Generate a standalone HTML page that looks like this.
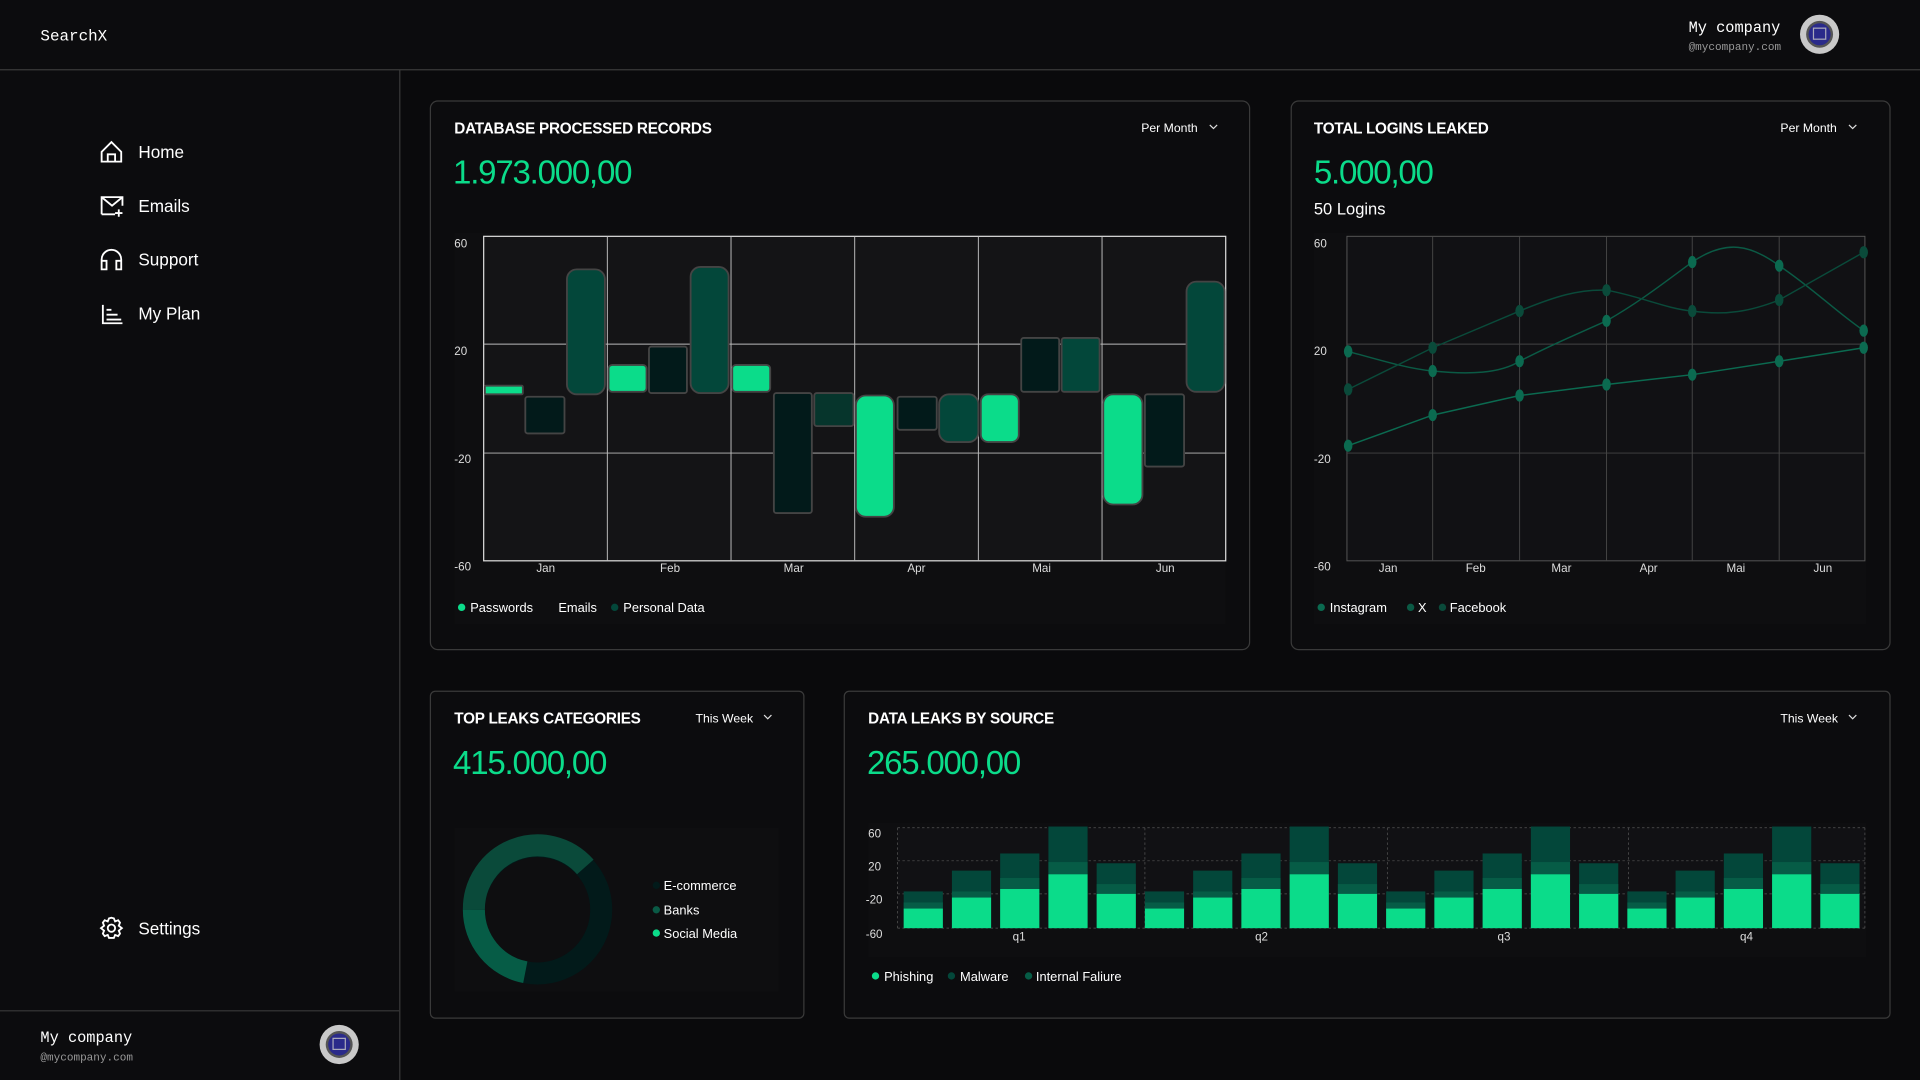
<!DOCTYPE html>
<html><head><meta charset="utf-8"><style>
html,body{margin:0;padding:0;background:#0a0a0c;overflow:hidden}
svg{display:block}
text{font-family:"Liberation Sans",sans-serif;fill:#fff}
.m{font-family:"Liberation Mono",monospace}
.t{font-size:12.5px;font-weight:bold;letter-spacing:-0.2px}
.v{font-size:27px;fill:#0bdc8a;letter-spacing:-1px}
.ax{font-size:9.5px;fill:#ddd}
.lg{font-size:10.5px}
.nav{font-size:14px}
</style></head><body>
<svg width="1920" height="1080" viewBox="0 0 1568 882" xmlns="http://www.w3.org/2000/svg">
<rect width="1568" height="882" fill="#0a0a0c"/>
<rect width="1568" height="57" fill="#0c0c0e"/>
<rect x="0" y="57" width="326" height="825" fill="#0c0c0e"/>
<line x1="0" y1="57" x2="1568" y2="57" stroke="#3a3a3a"/>
<line x1="326.5" y1="57" x2="326.5" y2="882" stroke="#3a3a3a"/>
<line x1="0" y1="825.5" x2="326" y2="825.5" stroke="#3a3a3a"/>
<text x="33" y="33" class="m" font-size="13">SearchX</text>
<text x="1379" y="26" class="m" font-size="12.5">My company</text>
<text x="1379" y="41" class="m" font-size="9" fill="#aaa" style="fill:#999">@mycompany.com</text>
<g transform="translate(1486,28)"><circle r="16" fill="#c9c9c9"/><circle r="11" fill="#555"/><circle r="9" fill="#2a2a8a"/><rect x="-5" y="-5" width="10" height="9" fill="none" stroke="#aab" stroke-width="1"/></g>
<!-- nav -->
<g fill="none" stroke="#fff" stroke-width="1.5">
<path d="M83 132V124L91 116L99 124V132H83ZM88 132V126H94V132"/>
<path d="M83 175V161H100V168M83 161L91.5 168L100 161M83 175H94M97 171V177M94 174H100"/>
<path d="M83 216V212A8 8 0 0 1 99 212V216M83 213H87V220H83ZM95 213H99V220H95Z"/>
<path d="M84 249V264H100M87 253H91M87 257H96M87 261H99"/>
<circle cx="91" cy="758" r="3"/>
<path d="M91 749.5L93 750L94 752.5L96.5 751.5L98 753.5L97 756L99.5 758L97 760L98 762.5L96.5 764.5L94 763.5L93 766H89L88 763.5L85.5 764.5L84 762.5L85 760L82.5 758L85 756L84 753.5L85.5 751.5L88 752.5L89 750Z"/>
</g>
<text x="113" y="129" class="nav">Home</text>
<text x="113" y="173" class="nav">Emails</text>
<text x="113" y="217" class="nav">Support</text>
<text x="113" y="261" class="nav">My Plan</text>
<text x="113" y="763" class="nav">Settings</text>
<text x="33" y="851" class="m" font-size="12.5">My company</text>
<text x="33" y="866" class="m" font-size="9" style="fill:#999">@mycompany.com</text>
<g transform="translate(277,853)"><circle r="16" fill="#c9c9c9"/><circle r="11" fill="#555"/><circle r="9" fill="#2a2a8a"/><rect x="-5" y="-5" width="10" height="9" fill="none" stroke="#aab" stroke-width="1"/></g>

<!-- cards -->
<g fill="#0c0c0e" stroke="#3a3a3a">
<rect x="351.5" y="82.5" width="669" height="448" rx="6"/>
<rect x="1054.5" y="82.5" width="489" height="448" rx="6"/>
<rect x="351.5" y="564.5" width="305" height="267" rx="4"/>
<rect x="689.5" y="564.5" width="854" height="267" rx="4"/>
</g>
<text x="371" y="109" class="t">DATABASE PROCESSED RECORDS</text>
<text x="1073" y="109" class="t">TOTAL LOGINS LEAKED</text>
<text x="371" y="591" class="t">TOP LEAKS CATEGORIES</text>
<text x="709" y="591" class="t">DATA LEAKS BY SOURCE</text>
<g font-size="10"><text x="932" y="108">Per Month</text><text x="1454" y="108">Per Month</text><text x="568" y="590">This Week</text><text x="1454" y="590">This Week</text></g>
<g fill="none" stroke="#ddd" stroke-width="1"><path d="M988 102L991 105L994 102M1510 102L1513 105L1516 102M624 584L627 587L630 584M1510 584L1513 587L1516 584"/></g>
<text x="370" y="150" class="v">1.973.000,00</text>
<text x="1073" y="150" class="v">5.000,00</text>
<text x="1073" y="175" font-size="13.5">50 Logins</text>
<text x="370" y="632" class="v">415.000,00</text>
<text x="708" y="632" class="v">265.000,00</text>

<!-- chart1 -->
<rect x="371" y="190" width="630" height="320" fill="#0e0e10"/>
<rect x="395" y="193" width="606" height="265" fill="#141416" stroke="#ddd" stroke-width="1"/>
<g stroke="#bbb" stroke-width="0.8"><path d="M395 281H1001M395 370H1001M496 193V458M597 193V458M698 193V458M799 193V458M900 193V458"/></g>
<g class="ax"><text x="371" y="202" class="ax">60</text><text x="371" y="290" class="ax">20</text><text x="371" y="378" class="ax">-20</text><text x="371" y="466" class="ax">-60</text>
<text x="438" y="467" class="ax" font-size="8">Jan</text><text x="539" y="467" class="ax" font-size="8">Feb</text><text x="640" y="467" class="ax" font-size="8">Mar</text><text x="741" y="467" class="ax" font-size="8">Apr</text><text x="843" y="467" class="ax" font-size="8">Mai</text><text x="944" y="467" class="ax" font-size="8">Jun</text></g>
<g stroke="#444" stroke-width="1.5">
<rect x="396" y="315" width="31" height="7" rx="1" fill="#0bdc8a"/>
<rect x="429" y="324" width="32" height="30" rx="2" fill="#021a1a"/>
<rect x="463" y="220" width="31" height="102" rx="8" fill="#03473a"/>
<rect x="497" y="298" width="31" height="22" rx="3" fill="#0bdc8a"/>
<rect x="530" y="283" width="31" height="38" rx="2" fill="#021a1a"/>
<rect x="564" y="218" width="31" height="103" rx="8" fill="#03473a"/>
<rect x="598" y="298" width="31" height="22" rx="3" fill="#0bdc8a"/>
<rect x="632" y="321" width="31" height="98" rx="2" fill="#021a1a"/>
<rect x="665" y="321" width="32" height="27" rx="2" fill="#06352c"/>
<rect x="699" y="323" width="31" height="99" rx="8" fill="#0bdc8a"/>
<rect x="733" y="324" width="32" height="27" rx="2" fill="#021a1a"/>
<rect x="767" y="322" width="32" height="39" rx="8" fill="#03473a"/>
<rect x="801" y="322" width="31" height="39" rx="6" fill="#0bdc8a"/>
<rect x="834" y="276" width="31" height="44" rx="2" fill="#021a1a"/>
<rect x="867" y="276" width="31" height="44" rx="2" fill="#03473a"/>
<rect x="901" y="322" width="32" height="90" rx="8" fill="#0bdc8a"/>
<rect x="935" y="322" width="32" height="59" rx="2" fill="#021a1a"/>
<rect x="969" y="230" width="31" height="90" rx="8" fill="#03473a"/>
</g>
<circle cx="377" cy="496" r="3" fill="#0bdc8a"/><text x="384" y="500" class="lg">Passwords</text>
<text x="456" y="500" class="lg">Emails</text>
<circle cx="502" cy="496" r="3" fill="#03473a"/><text x="509" y="500" class="lg">Personal Data</text>

<!-- chart2 -->
<rect x="1073" y="190" width="451" height="320" fill="#0e0e10"/>
<rect x="1100" y="193" width="423" height="265" fill="#111114" stroke="#555" stroke-width="0.8"/>
<g stroke="#444" stroke-width="0.8"><path d="M1100 281H1523M1100 370H1523M1170 193V458M1241 193V458M1312 193V458M1382 193V458M1453 193V458"/></g>
<g><text x="1073" y="202" class="ax">60</text><text x="1073" y="290" class="ax">20</text><text x="1073" y="378" class="ax">-20</text><text x="1073" y="466" class="ax">-60</text>
<text x="1126" y="467" class="ax" font-size="8">Jan</text><text x="1197" y="467" class="ax" font-size="8">Feb</text><text x="1267" y="467" class="ax" font-size="8">Mar</text><text x="1339" y="467" class="ax" font-size="8">Apr</text><text x="1410" y="467" class="ax" font-size="8">Mai</text><text x="1481" y="467" class="ax" font-size="8">Jun</text></g>
<g fill="none" stroke-width="1.2">
<path d="M1101 287C1130 295 1150 301 1170 303C1200 306 1225 305 1241 295C1270 280 1290 272 1312 262C1340 246 1360 230 1382 214C1410 195 1430 200 1453 217C1480 235 1500 255 1522 270" stroke="#0b5a45"/>
<path d="M1101 318L1170 284L1241 254C1270 242 1290 236 1312 237C1340 242 1360 252 1382 254C1410 258 1430 254 1453 245L1522 206" stroke="#0a4a3a"/>
<path d="M1101 364L1170 339L1241 323L1312 314L1382 306L1453 295L1522 284" stroke="#0b6a50"/>
</g>
<g fill="#0b6a50"><ellipse cx="1101" cy="287" rx="3.5" ry="5"/><ellipse cx="1170" cy="303" rx="3.5" ry="5"/><ellipse cx="1241" cy="295" rx="3.5" ry="5"/><ellipse cx="1312" cy="262" rx="3.5" ry="5"/><ellipse cx="1382" cy="214" rx="3.5" ry="5"/><ellipse cx="1453" cy="217" rx="3.5" ry="5"/><ellipse cx="1522" cy="270" rx="3.5" ry="5"/>
<ellipse cx="1101" cy="364" rx="3.5" ry="5"/><ellipse cx="1170" cy="339" rx="3.5" ry="5"/><ellipse cx="1241" cy="323" rx="3.5" ry="5"/><ellipse cx="1312" cy="314" rx="3.5" ry="5"/><ellipse cx="1382" cy="306" rx="3.5" ry="5"/><ellipse cx="1453" cy="295" rx="3.5" ry="5"/><ellipse cx="1522" cy="284" rx="3.5" ry="5"/></g>
<g fill="#0a4a3a"><ellipse cx="1101" cy="318" rx="3.5" ry="5"/><ellipse cx="1170" cy="284" rx="3.5" ry="5"/><ellipse cx="1241" cy="254" rx="3.5" ry="5"/><ellipse cx="1312" cy="237" rx="3.5" ry="5"/><ellipse cx="1382" cy="254" rx="3.5" ry="5"/><ellipse cx="1453" cy="245" rx="3.5" ry="5"/><ellipse cx="1522" cy="206" rx="3.5" ry="5"/></g>
<circle cx="1079" cy="496" r="3" fill="#0b6a50"/><text x="1086" y="500" class="lg">Instagram</text>
<circle cx="1152" cy="496" r="3" fill="#0b5a45"/><text x="1158" y="500" class="lg">X</text>
<circle cx="1178" cy="496" r="3" fill="#0a4a3a"/><text x="1184" y="500" class="lg">Facebook</text>

<!-- donut -->
<rect x="371" y="676" width="265" height="134" fill="#0e0e10"/>
<circle cx="439" cy="743" r="52" fill="none" stroke="#021a1a" stroke-width="18"/>
<path d="M439 691A52 52 0 0 1 478 708" fill="none" stroke="#021a1a" stroke-width="18"/>
<path d="M478 708A52 52 0 0 0 387 743" fill="none" stroke="#0a4a3a" stroke-width="18"/>
<path d="M387 743A52 52 0 0 0 429 794" fill="none" stroke="#065c46" stroke-width="18"/>
<circle cx="536" cy="723" r="3" fill="#021a1a"/><text x="542" y="727" class="lg">E-commerce</text>
<circle cx="536" cy="743" r="3" fill="#0a5a46"/><text x="542" y="747" class="lg">Banks</text>
<circle cx="536" cy="762" r="3" fill="#0bdc8a"/><text x="542" y="766" class="lg">Social Media</text>

<!-- bars -->
<rect x="709" y="672" width="815" height="110" fill="#0e0e10"/>
<rect x="733" y="676" width="790" height="82" fill="#111114"/>
<g stroke="#555" stroke-width="0.6" stroke-dasharray="2,2" fill="none"><path d="M733 676H1523M733 703H1523M733 730H1523M733 758H1523M733 676V758M935 676V758M1133 676V758M1330 676V758M1523 676V758"/></g>
<g font-size="9.5"><text x="709" y="684" class="ax">60</text><text x="709" y="711" class="ax">20</text><text x="707" y="738" class="ax">-20</text><text x="707" y="766" class="ax">-60</text>
<text x="827" y="768" class="ax" font-size="8">q1</text><text x="1025" y="768" class="ax" font-size="8">q2</text><text x="1223" y="768" class="ax" font-size="8">q3</text><text x="1421" y="768" class="ax" font-size="8">q4</text></g>
<defs><g id="grp">
<rect x="0" y="728" width="32" height="30" fill="#03473a"/><rect x="0" y="737" width="32" height="5" fill="#065c46"/><rect x="0" y="742" width="32" height="16" fill="#0bdc8a"/>
<rect x="39.4" y="711" width="32" height="47" fill="#03473a"/><rect x="39.4" y="728" width="32" height="5" fill="#065c46"/><rect x="39.4" y="733" width="32" height="25" fill="#0bdc8a"/>
<rect x="78.8" y="697" width="32" height="61" fill="#03473a"/><rect x="78.8" y="717" width="32" height="9" fill="#065c46"/><rect x="78.8" y="726" width="32" height="32" fill="#0bdc8a"/>
<rect x="118.2" y="675" width="32" height="83" fill="#03473a"/><rect x="118.2" y="704" width="32" height="10" fill="#065c46"/><rect x="118.2" y="714" width="32" height="44" fill="#0bdc8a"/>
<rect x="157.6" y="705" width="32" height="53" fill="#03473a"/><rect x="157.6" y="722" width="32" height="8" fill="#065c46"/><rect x="157.6" y="730" width="32" height="28" fill="#0bdc8a"/>
</g></defs>
<use href="#grp" x="738"/><use href="#grp" x="935"/><use href="#grp" x="1132"/><use href="#grp" x="1329"/>
<circle cx="715" cy="797" r="3" fill="#0bdc8a"/><text x="722" y="801" class="lg">Phishing</text>
<circle cx="777" cy="797" r="3" fill="#03473a"/><text x="784" y="801" class="lg">Malware</text>
<circle cx="840" cy="797" r="3" fill="#065c46"/><text x="846" y="801" class="lg">Internal Faliure</text>
</svg>
</body></html>
